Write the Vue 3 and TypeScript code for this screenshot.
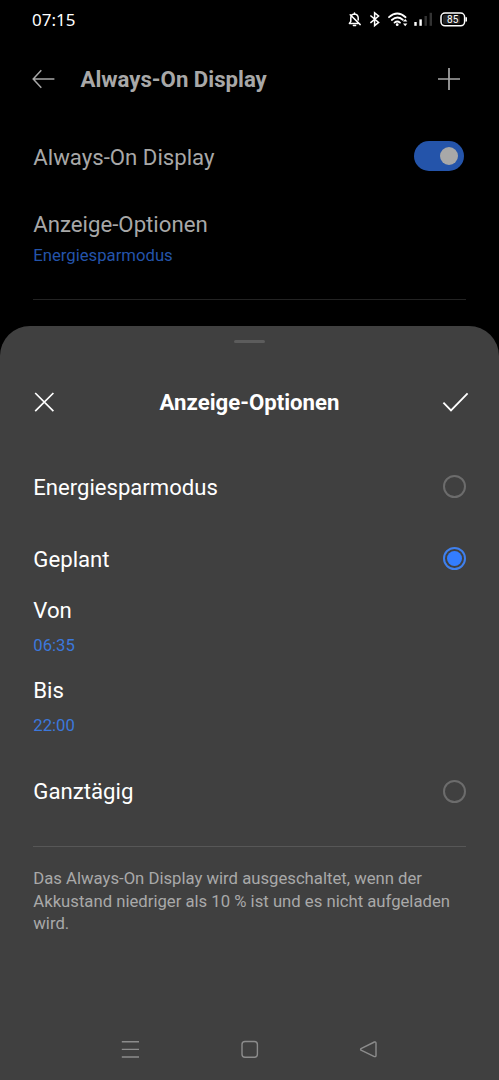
<script setup lang="ts">
import { ref } from 'vue'

type Mode = 'saver' | 'scheduled' | 'allday'

const selected = ref<Mode>('scheduled')
const times = [
  { label: 'Von', value: '06:35' },
  { label: 'Bis', value: '22:00' },
]
</script>

<template>
  <div class="screen">
    <header class="status">
      <span class="clock">07:15</span>
      <svg class="status-icons" width="130" height="24" viewBox="0 0 130 24" fill="none" stroke="#fff">
        <g stroke-width="1.5" stroke-linecap="round" stroke-linejoin="round" transform="translate(.8 .2)">
          <path d="M12 16.2H3.6L5 14.2V10.8Q5 6.9 8.6 6.7Q12.2 6.9 12.4 10.6V12.8M8.7 5.8V6.5M4.4 7.6L14.4 17.4M7.6 18.4H9.8" />
        </g>
        <path d="M25.4 8.5L33.6 15.4L29.6 18.6V5.8L33.6 9L25.4 15.9" stroke-width="1.5" />
        <g stroke-width="1.8" stroke-linecap="round">
          <path d="M44 10.2Q52.2 2.8 60.6 10.2" />
          <path d="M46.8 13Q52.3 8.2 57.8 12.8" />
          <path d="M49.5 15.6Q52.3 13.4 55 15.6" />
        </g>
        <circle cx="52.2" cy="17.7" r="1.4" fill="#fff" stroke="none" />
        <path d="M58 14.6L60.2 12L62.4 14.6ZM58 16.6L60.2 19.2L62.4 16.6Z" fill="#fff" stroke="none" />
        <g stroke="none">
          <rect x="69.3" y="15" width="2.4" height="3.8" fill="#fff" />
          <rect x="74.4" y="12.4" width="2.4" height="6.4" fill="#fff" />
          <rect x="79.5" y="9" width="2.4" height="9.8" fill="#333" />
          <rect x="84.6" y="5.8" width="2.4" height="13" fill="#333" />
        </g>
        <rect x="96" y="6" width="23.6" height="12.8" rx="4" stroke-width="1.5" />
        <path d="M121.2 10.2V14.6" stroke-width="1.6" />
        <rect x="98" y="8" width="17" height="8.8" rx="1.5" fill="#242424" stroke="none" />
        <text x="107.7" y="16" text-anchor="middle" class="battery">85</text>
      </svg>
    </header>

    <div class="bar">
      <svg width="24" height="20" viewBox="0 0 24 20" fill="none" stroke="#a8a8a8" stroke-width="1.5">
        <path d="M9.3 1.2L1.2 10L9.3 18.7M1.2 10H22.4" />
      </svg>
      <h1 class="title">Always-On Display</h1>
      <svg width="24" height="24" viewBox="0 0 24 24" fill="none" stroke="#a8a8a8" stroke-width="1.7">
        <path d="M12 1V23M1 12H23" />
      </svg>
    </div>

    <div class="setting">
      <span>Always-On Display</span>
      <span class="toggle"><i class="knob"></i></span>
    </div>
    <div class="option">
      <span class="option-name">Anzeige-Optionen</span>
      <span class="option-value">Energiesparmodus</span>
    </div>
    <hr class="rule dark" />

    <section class="sheet">
      <i class="handle"></i>
      <div class="sheet-head">
        <svg width="22" height="22" viewBox="0 0 22 22" fill="none" stroke="#fff" stroke-width="1.7">
          <path d="M2.2 2L20.4 20.2M20.4 2L2.2 20.2" />
        </svg>
        <h2 class="sheet-title">Anzeige-Optionen</h2>
        <svg width="28" height="22" viewBox="0 0 28 22" fill="none" stroke="#fff" stroke-width="1.8">
          <path d="M2.4 11.6L10 19.4L26.6 2.3" />
        </svg>
      </div>

      <div class="choice first" @click="selected = 'saver'">
        <span>Energiesparmodus</span>
        <i class="radio" :class="{ on: selected === 'saver' }"></i>
      </div>
      <div class="choice second" @click="selected = 'scheduled'">
        <span>Geplant</span>
        <i class="radio" :class="{ on: selected === 'scheduled' }"></i>
      </div>
      <div v-for="t in times" :key="t.label" class="time">
        <span class="time-label">{{ t.label }}</span>
        <span class="time-value">{{ t.value }}</span>
      </div>
      <div class="choice third" @click="selected = 'allday'">
        <span>Ganztägig</span>
        <i class="radio" :class="{ on: selected === 'allday' }"></i>
      </div>
      <hr class="rule" />
      <p class="note">
        Das Always-On Display wird ausgeschaltet, wenn der<br />Akkustand niedriger als 10 % ist und es nicht aufgeladen<br />wird.
      </p>

      <nav class="nav">
        <svg width="20" height="20" viewBox="0 0 20 20" fill="none" stroke="#8c8c8c" stroke-width="1.4">
          <path d="M1.8 2.8H19M1.8 10.4H19M1.8 18H19" />
        </svg>
        <svg width="20" height="20" viewBox="0 0 20 20" fill="none" stroke="#8c8c8c" stroke-width="1.4">
          <rect x="2" y="2.5" width="15.4" height="15.8" rx="3" />
        </svg>
        <svg width="20" height="20" viewBox="0 0 20 20" fill="none" stroke="#8c8c8c" stroke-width="1.4" stroke-linejoin="round">
          <path d="M2 9.6Q1.2 10.4 2 11.2L15.4 17.6Q17 17.9 17 16.4V4.1Q17 2.6 15.4 3Z" />
        </svg>
      </nav>
    </section>
  </div>
</template>

<style>
body {
  margin: 0;
  background: #000;
}
</style>

<style scoped>
.screen {
  width: 499px;
  height: 1080px;
  box-sizing: border-box;
  display: flex;
  flex-direction: column;
  overflow: hidden;
  background: #000;
  color: #a8a8a8;
  font-family: Roboto, "Liberation Sans", sans-serif;
  font-size: 22.2px;
}
.screen svg {
  display: block;
  flex: none;
}
.status {
  height: 40px;
  padding: 7px 24px 0 32px;
  box-sizing: border-box;
  display: flex;
  justify-content: space-between;
}
.clock {
  color: #fff;
  font-family: "Noto Sans", sans-serif;
  font-size: 17px;
  line-height: 25px;
}
.battery {
  fill: #fff;
  stroke: none;
  font-size: 10px;
}
.bar {
  height: 78px;
  padding: 0 38px 0 32px;
  display: flex;
  align-items: center;
}
.title {
  flex: 1;
  margin: 0 0 0 24.5px;
  font-size: 22.2px;
  font-weight: 700;
  line-height: 26px;
}
.setting {
  height: 78px;
  padding: 0 35px 0 33.3px;
  display: flex;
  align-items: center;
  justify-content: space-between;
}
.toggle {
  width: 50px;
  height: 30px;
  margin-top: -2px;
  padding-right: 6px;
  box-sizing: border-box;
  border-radius: 15px;
  background: #2454aa;
  display: flex;
  align-items: center;
  justify-content: flex-end;
}
.knob {
  width: 18px;
  height: 18px;
  border-radius: 50%;
  background: #a8a8a8;
}
.option {
  height: 103px;
  padding: 14px 33.3px 0;
  box-sizing: border-box;
  display: flex;
  flex-direction: column;
}
.option-name {
  line-height: 28px;
}
.option-value {
  margin-top: 8px;
  color: #2454aa;
  font-size: 16.7px;
  line-height: 20px;
}
.rule {
  height: 1px;
  margin: 0 33px;
  border: 0;
  flex: none;
  background: #575757;
}
.rule.dark {
  background: #232323;
}
.sheet {
  flex: 1;
  margin-top: 26px;
  border-radius: 30px 30px 0 0;
  background: #404040;
  color: #fff;
  display: flex;
  flex-direction: column;
}
.handle {
  width: 31px;
  height: 3px;
  margin: 14px auto 0;
  border-radius: 1.5px;
  background: #5c5c5c;
}
.sheet-head {
  height: 26px;
  margin-top: 46px;
  padding: 0 30px 0 33px;
  display: flex;
  align-items: center;
  justify-content: space-between;
}
.sheet-title {
  margin: 0 0 0 3px;
  font-size: 22.2px;
  font-weight: 700;
  line-height: 26px;
}
.choice {
  height: 28px;
  padding: 0 33px 0 33.3px;
  display: flex;
  align-items: center;
  justify-content: space-between;
}
.first {
  margin-top: 58px;
  font-size: 22.1px;
}
.second {
  margin-top: 44px;
  margin-bottom: 23px;
}
.third {
  margin-top: 22px;
}
.third > span {
  margin-top: -2px;
}
.radio {
  width: 23px;
  height: 23px;
  margin-top: -2px;
  box-sizing: border-box;
  border: 2px solid #6c6c6c;
  border-radius: 50%;
  display: grid;
  place-items: center;
}
.radio.on {
  border: 2px solid #3f80ee;
}
.radio.on::after {
  content: "";
  width: 15px;
  height: 15px;
  border-radius: 50%;
  background: #337dff;
}
.time {
  height: 80px;
  padding: 0 33.3px;
  display: flex;
  flex-direction: column;
}
.time-label {
  line-height: 28px;
}
.time-value {
  margin-top: 12px;
  color: #3c78dc;
  font-size: 16.7px;
  line-height: 20px;
}
.third + .rule {
  margin-top: 40px;
}
.note {
  margin: 21.4px 33.3px 0;
  color: #a9a9a9;
  font-size: 16.7px;
  line-height: 22.4px;
  white-space: nowrap;
}
.nav {
  margin: auto 0 21px;
  padding: 0 120px;
  display: flex;
  justify-content: space-between;
}
</style>
